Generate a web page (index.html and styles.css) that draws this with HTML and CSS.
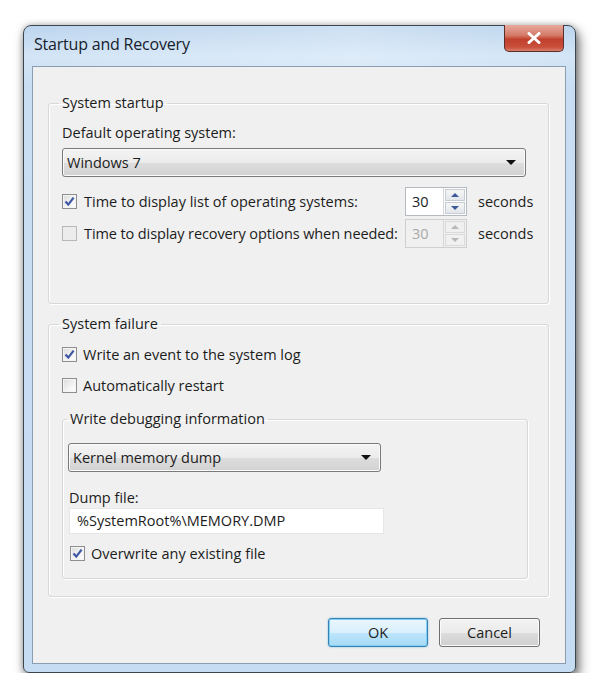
FILE: index.html
```html
<!DOCTYPE html>
<html>
<head>
<meta charset="utf-8">
<link rel="stylesheet" href="styles.css">
</head>
<body>
<div class="window">
  <div class="titlebar">
    <span class="title">Startup and Recovery</span>
    <span class="close"><svg width="16" height="12" viewBox="0 0 16 12"><path d="M3 1.5 L13 10.5 M13 1.5 L3 10.5" stroke="#fff" stroke-width="3" stroke-linecap="round"/></svg></span>
  </div>
  <div class="client">
    <fieldset class="group g1">
      <legend>System startup</legend>
      <div class="label l-default">Default operating system:</div>
      <div class="combo wide"><span>Windows 7</span><span class="arrow"></span></div>
      <div class="timerow r1">
        <span class="check checked"><svg width="11" height="11" viewBox="0 0 11 11"><path d="M1.5 5.5 L4.3 8.6 L9.6 1.6" fill="none" stroke="#3e58a3" stroke-width="2.2"/></svg></span>
        <span class="txt">Time to display list of operating systems:</span>
        <span class="spin"><span class="val">30</span><span class="btns"><span class="up"><i class="tri-up"></i></span><span class="dn"><i class="tri-dn"></i></span></span></span>
        <span class="unit">seconds</span>
      </div>
      <div class="timerow r2 disabled">
        <span class="check"></span>
        <span class="txt">Time to display recovery options when needed:</span>
        <span class="spin"><span class="val">30</span><span class="btns"><span class="up"><i class="tri-up"></i></span><span class="dn"><i class="tri-dn"></i></span></span></span>
        <span class="unit">seconds</span>
      </div>
    </fieldset>

    <fieldset class="group g2">
      <legend>System failure</legend>
      <div class="cbrow c1">
        <span class="check checked"><svg width="11" height="11" viewBox="0 0 11 11"><path d="M1.5 5.5 L4.3 8.6 L9.6 1.6" fill="none" stroke="#3e58a3" stroke-width="2.2"/></svg></span>
        <span class="txt">Write an event to the system log</span>
      </div>
      <div class="cbrow c2">
        <span class="check"></span>
        <span class="txt">Automatically restart</span>
      </div>
      <fieldset class="group g3">
        <legend>Write debugging information</legend>
        <div class="combo narrow"><span>Kernel memory dump</span><span class="arrow"></span></div>
        <div class="label l-dump">Dump file:</div>
        <div class="field">%SystemRoot%\MEMORY.DMP</div>
        <div class="cbrow c3">
          <span class="check checked"><svg width="11" height="11" viewBox="0 0 11 11"><path d="M1.5 5.5 L4.3 8.6 L9.6 1.6" fill="none" stroke="#3e58a3" stroke-width="2.2"/></svg></span>
          <span class="txt">Overwrite any existing file</span>
        </div>
      </fieldset>
    </fieldset>

    <div class="buttons">
      <span class="btn ok">OK</span>
      <span class="btn cancel">Cancel</span>
    </div>
  </div>
</div>
</body>
</html>
```
FILE: styles.css
```css
html, body {
  margin: 0;
  padding: 0;
  background: #ffffff;
}
body {
  padding: 25px 0 0 23px;
  font-family: "Open Sans", "Noto Sans", sans-serif;
  font-size: 14.5px;
  color: #1c1c1c;
}
.window {
  box-sizing: border-box;
  width: 553px;
  height: 648px;
  border: 1px solid #3d464f;
  border-radius: 8px 8px 6px 6px;
  background: linear-gradient(180deg, #bcd5ee 0px, #d3e5f6 30px, #c9def3 60px, #c6dcf2 100%);
  box-shadow: 3px 6px 12px rgba(0,0,0,0.55), 0 0 6px rgba(0,0,0,0.25);
  display: flex;
  flex-direction: column;
}
.titlebar {
  height: 40px;
  display: flex;
  align-items: flex-start;
  justify-content: space-between;
  background: linear-gradient(90deg, rgba(255,255,255,0) 0%, rgba(255,255,255,0.25) 60%, rgba(255,255,255,0) 100%);
}
.title {
  margin: 7px 0 0 10px;
  font-size: 16px;
  color: #15202b;
  letter-spacing: -0.2px;
}
.close {
  margin: -1px 11px 0 0;
  width: 60px;
  height: 27px;
  box-sizing: border-box;
  border: 1px solid #5c2f2a;
  border-top: none;
  border-radius: 0 0 5px 5px;
  background: linear-gradient(180deg, #e6a99d 0%, #d47a68 40%, #c0402c 55%, #c9503b 85%, #d97e6c 100%);
  display: flex;
  align-items: center;
  justify-content: center;
}
.client {
  margin: 0 9px 0 8px;
  height: 598px;
  box-sizing: border-box;
  border: 1px solid #8b9db3;
  background: #f0f0f0;
  padding: 26px 16px 0 15px;
  display: flex;
  flex-direction: column;
}
.group {
  margin: 0;
  border: 1px solid #d8d8d8;
  border-radius: 3px;
  box-shadow: inset 1px 1px 0 #ffffff, 1px 1px 0 #ffffff;
  padding: 0 0 0 13px;
  min-width: 0;
}
legend {
  padding: 0 3px;
  margin-left: -3px;
  line-height: 20px;
}
.label {
  line-height: 20px;
}
.g1 {
  padding-bottom: 55px;
}
.l-default {
  margin-top: 10px;
}
.combo {
  box-sizing: border-box;
  height: 29px;
  border: 1px solid #7a7a7a;
  border-radius: 3px;
  background: linear-gradient(180deg, #f4f4f4 0%, #ebebeb 50%, #dddddd 51%, #d2d2d2 100%);
  box-shadow: inset 0 0 0 1px #fafafa;
  display: flex;
  align-items: center;
  justify-content: space-between;
  padding: 0 9px 0 4px;
}
.combo.wide {
  margin-top: 5px;
  width: 464px;
}
.combo.narrow {
  margin-top: 14px;
  width: 313px;
  margin-left: -1px;
}
.arrow {
  width: 0;
  height: 0;
  border-left: 5px solid transparent;
  border-right: 5px solid transparent;
  border-top: 5px solid #111;
}
.check {
  box-sizing: border-box;
  width: 15px;
  height: 15px;
  border: 1px solid #8e8f8f;
  background: linear-gradient(135deg, #dcdcdc 0%, #f4f4f4 60%, #ffffff 100%);
  box-shadow: inset 0 0 0 1px #f4f4f4;
  display: inline-flex;
  align-items: center;
  justify-content: center;
  flex: none;
}
.timerow {
  display: flex;
  align-items: center;
  height: 29px;
}
.timerow .txt {
  margin-left: 7px;
  width: 321px;
  white-space: nowrap;
}
.r2 .txt { letter-spacing: -0.1px; }
.r1 { margin-top: 10px; }
.r2 { margin-top: 3px; }
.spin {
  box-sizing: border-box;
  width: 62px;
  height: 29px;
  border: 1px solid #b5b9c0;
  background: #ffffff;
  display: flex;
  justify-content: space-between;
  flex: none;
}
.spin .val {
  padding-left: 6px;
  line-height: 27px;
}
.spin .btns {
  width: 22px;
  display: flex;
  flex-direction: column;
  border-left: 1px solid #d4d7dc;
}
.spin .up, .spin .dn {
  flex: 1;
  display: flex;
  align-items: center;
  justify-content: center;
  background: linear-gradient(180deg, #f6f6f6, #e3e6ea);
  border: 1px solid #c7ccd3;
  margin: 1px;
}
.spin .up { margin-bottom: 0; }
.tri-up, .tri-dn {
  width: 0;
  height: 0;
  border-left: 4px solid transparent;
  border-right: 4px solid transparent;
}
.tri-up { border-bottom: 4px solid #3d5b9a; }
.tri-dn { border-top: 4px solid #3d5b9a; }
.unit {
  margin-left: 11px;
}
.disabled .val { color: #a8a8a8; }
.disabled .spin { border-color: #cfcfcf; background: #f0f0f0; }
.disabled .spin .up, .disabled .spin .dn { background: #f0f0f0; border-color: #dadada; }
.disabled .tri-up { border-bottom-color: #b8b8b8; }
.disabled .tri-dn { border-top-color: #b8b8b8; }
.disabled .check { border-color: #b8b8b8; background: #ececec; box-shadow: none; }

.g2 {
  margin-top: 10px;
  padding-bottom: 17px;
}
.cbrow {
  display: flex;
  align-items: center;
  height: 20px;
}
.cbrow .txt { margin-left: 6px; }
.c1 { margin-top: 10px; }
.c2 { margin-top: 11px; }
.g3 {
  margin: 14px 20px 0 0;
  padding: 0 0 15px 6px;
}
.g3 legend { margin-left: -2px; }
.l-dump { margin-top: 16px; }
.field {
  box-sizing: border-box;
  width: 315px;
  height: 26px;
  background: #ffffff;
  border: 1px solid #e6e6e6;
  line-height: 24px;
  padding-left: 7px;
}
.c3 { margin-top: 9px; }
.c3 .check { margin-left: 1px; }

.buttons {
  margin-top: 21px;
  display: flex;
  justify-content: flex-end;
  gap: 11px;
  padding-right: 9px;
}
.btn {
  box-sizing: border-box;
  height: 29px;
  border-radius: 3px;
  display: flex;
  align-items: center;
  justify-content: center;
}
.ok {
  width: 100px;
  border: 1px solid #3c7fb1;
  background: linear-gradient(180deg, #eaf6fd 0%, #d9f0fc 50%, #bee6fd 51%, #a7d9f5 100%);
  box-shadow: inset 0 0 0 1px #7fd0f5, 0 0 2px #6cb9e6;
}
.cancel {
  width: 101px;
  border: 1px solid #707070;
  background: linear-gradient(180deg, #f2f2f2 0%, #ebebeb 50%, #dddddd 51%, #cfcfcf 100%);
  box-shadow: inset 0 0 0 1px #fbfbfb;
}
```
